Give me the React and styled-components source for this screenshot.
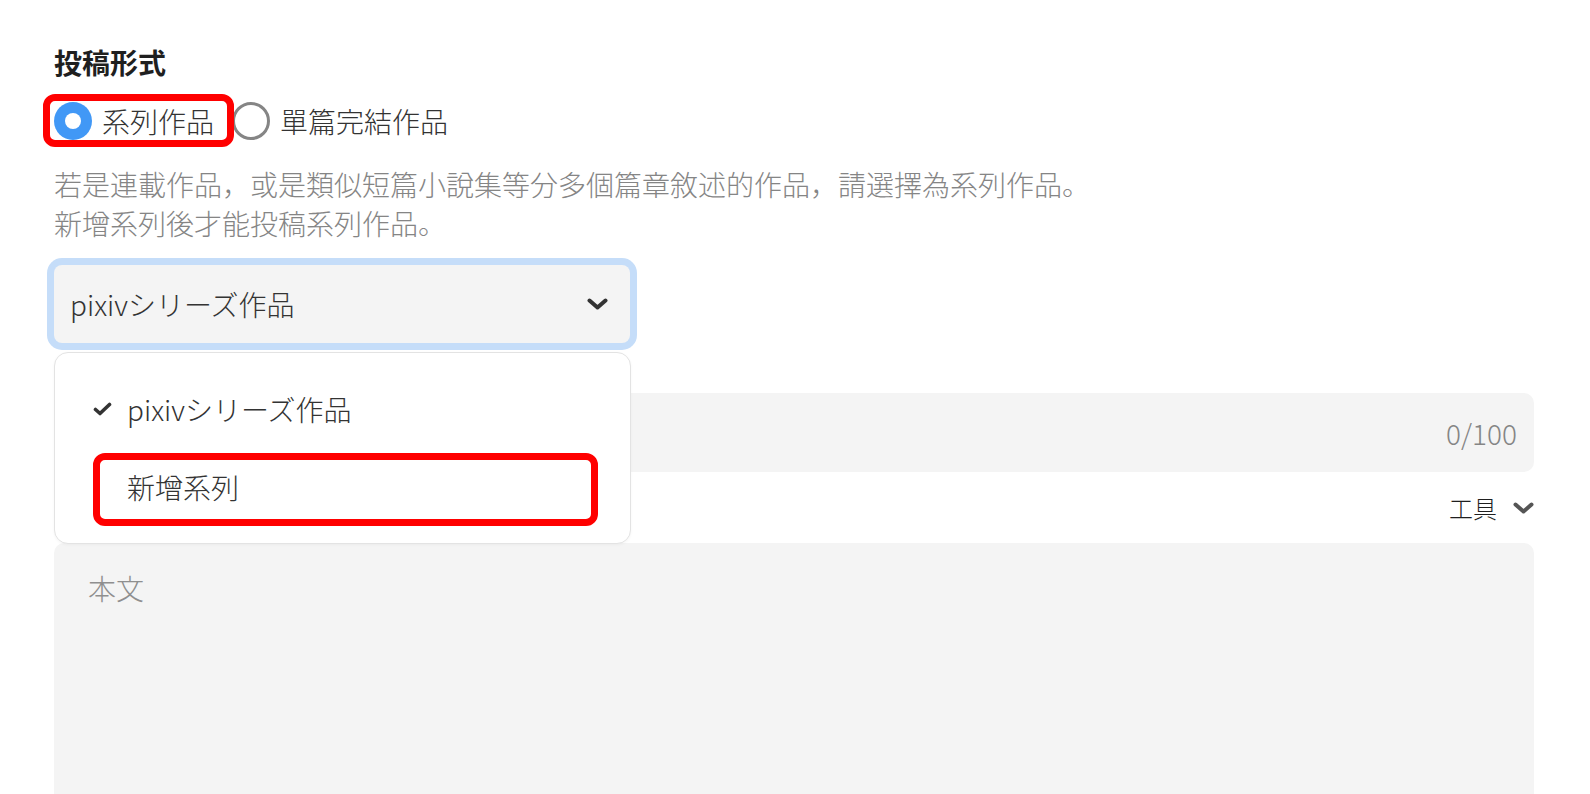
import styled, { createGlobalStyle } from "styled-components";

const GlobalStyle = createGlobalStyle`
  html, body {
    margin: 0;
    padding: 0;
    background: #fff;
    overflow: hidden;
  }
  * {
    box-sizing: border-box;
  }
`;

const BLUE = "#4198f6";
const GREY_TEXT = "#858585";
const FIELD_BG = "#f4f4f4";
const FONT = `"Noto Sans CJK JP", "Noto Sans CJK TC", sans-serif`;

const Page = styled.main`
  padding: 42px 56px 0 54px;
  font-family: ${FONT};
  font-weight: 300;
  color: #333;
`;

const SectionTitle = styled.h2`
  margin: 0 0 19px;
  font-size: 28px;
  line-height: 40px;
  font-weight: 700;
  color: #1f1f1f;
`;

const RadioRow = styled.div`
  display: flex;
  align-items: center;
  gap: 18px;
  height: 40px;
`;

const RadioOption = styled.label`
  position: relative;
  display: flex;
  align-items: center;
  gap: 10px;
  font-size: 28px;
  line-height: 40px;
  color: #333;
`;

const RadioDot = styled.span`
  position: relative;
  width: 38px;
  height: 38px;
  border-radius: 50%;
  background: ${p => (p.$checked ? BLUE : "#fff")};
  border: ${p => (p.$checked ? "none" : `3.5px solid ${GREY_TEXT}`)};

  &::after {
    content: "";
    display: ${p => (p.$checked ? "block" : "none")};
    position: absolute;
    left: 11px;
    top: 11px;
    width: 16px;
    height: 16px;
    border-radius: 50%;
    background: #fff;
  }
`;

// red outline drawn over the highlighted control
const Highlight = styled.span`
  position: absolute;
  top: ${p => p.$top}px;
  right: ${p => p.$right}px;
  bottom: ${p => p.$bottom}px;
  left: ${p => p.$left}px;
  border: 7px solid #ff0000;
  border-radius: 12px;
  pointer-events: none;
  z-index: 3;
`;

const Hint = styled.p`
  margin: 24px 0 0;
  font-size: 28px;
  line-height: 39px;
  color: ${GREY_TEXT};
`;

const SelectWrap = styled.div`
  position: relative;
  width: 576px;
  margin-top: 22px;
`;

const SelectBox = styled.div`
  display: flex;
  align-items: center;
  justify-content: space-between;
  height: 78px;
  padding: 0 22px 0 16px;
  border-radius: 8px;
  background: ${FIELD_BG};
  box-shadow: 0 0 0 7px #c5ddf9;
  font-size: 28px;
  color: #333;
`;

const Menu = styled.ul`
  position: absolute;
  top: calc(100% + 9px);
  left: 0;
  width: 577px;
  margin: 0;
  padding: 17px 0;
  list-style: none;
  background: #fff;
  border: 1.5px solid #e3e3e3;
  border-radius: 14px;
  box-shadow: 0 1px 3px rgba(0, 0, 0, 0.04);
  z-index: 2;
`;

const MenuItem = styled.li`
  position: relative;
  display: flex;
  align-items: center;
  gap: 15px;
  height: 78px;
  padding-left: 38px;
  font-size: 28px;
  color: #333;
`;

const CheckSlot = styled.span`
  display: flex;
  align-items: center;
  width: 19px;
`;

const TitleField = styled.div`
  display: flex;
  align-items: center;
  justify-content: flex-end;
  height: 79px;
  margin-top: 50px;
  padding-right: 17px;
  border-radius: 10px;
  background: ${FIELD_BG};
  font-size: 28px;
  color: ${GREY_TEXT};
`;

const ToolBar = styled.div`
  display: flex;
  align-items: center;
  justify-content: flex-end;
  gap: 16px;
  height: 71px;
  font-size: 24px;
  color: #1f1f1f;
`;

const Body = styled.textarea`
  display: block;
  width: 100%;
  height: 420px;
  padding: 25px 34px;
  border: none;
  border-radius: 10px;
  background: ${FIELD_BG};
  resize: none;
  outline: none;
  font-family: ${FONT};
  font-weight: 300;
  font-size: 28px;
  line-height: 40px;
  color: #333;

  &::placeholder {
    color: #8f8f8f;
  }
`;

function Chevron({ color = "#333" }) {
  return (
    <svg width="21" height="12" viewBox="0 0 21 12">
      <path
        d="M2.5 2.5 L10.5 9.5 L18.5 2.5"
        fill="none"
        stroke={color}
        strokeWidth="4"
        strokeLinecap="round"
        strokeLinejoin="round"
      />
    </svg>
  );
}

function Check() {
  return (
    <svg width="19" height="14" viewBox="0 0 19 14">
      <path
        d="M2.5 7.5 L7 11.5 L16.5 2.5"
        fill="none"
        stroke="#333"
        strokeWidth="3.6"
        strokeLinecap="round"
        strokeLinejoin="round"
      />
    </svg>
  );
}

export default function App() {
  const series = "pixivシリーズ作品";

  return (
    <Page>
      <GlobalStyle />
      <SectionTitle>投稿形式</SectionTitle>
      <RadioRow>
        <RadioOption>
          <RadioDot $checked />
          系列作品
          <Highlight $top={-7} $right={-20} $bottom={-6} $left={-11} />
        </RadioOption>
        <RadioOption>
          <RadioDot />
          單篇完結作品
        </RadioOption>
      </RadioRow>
      <Hint>
        若是連載作品，或是類似短篇小說集等分多個篇章敘述的作品，請選擇為系列作品。
        <br />
        新增系列後才能投稿系列作品。
      </Hint>
      <SelectWrap>
        <SelectBox>
          {series}
          <Chevron />
        </SelectBox>
        <Menu>
          <MenuItem>
            <CheckSlot>
              <Check />
            </CheckSlot>
            {series}
          </MenuItem>
          <MenuItem>
            <CheckSlot />
            新增系列
            <Highlight $top={5} $right={32} $bottom={0} $left={38} />
          </MenuItem>
        </Menu>
      </SelectWrap>
      <TitleField>0/100</TitleField>
      <ToolBar>
        工具
        <Chevron color="#555" />
      </ToolBar>
      <Body placeholder="本文" readOnly />
    </Page>
  );
}
